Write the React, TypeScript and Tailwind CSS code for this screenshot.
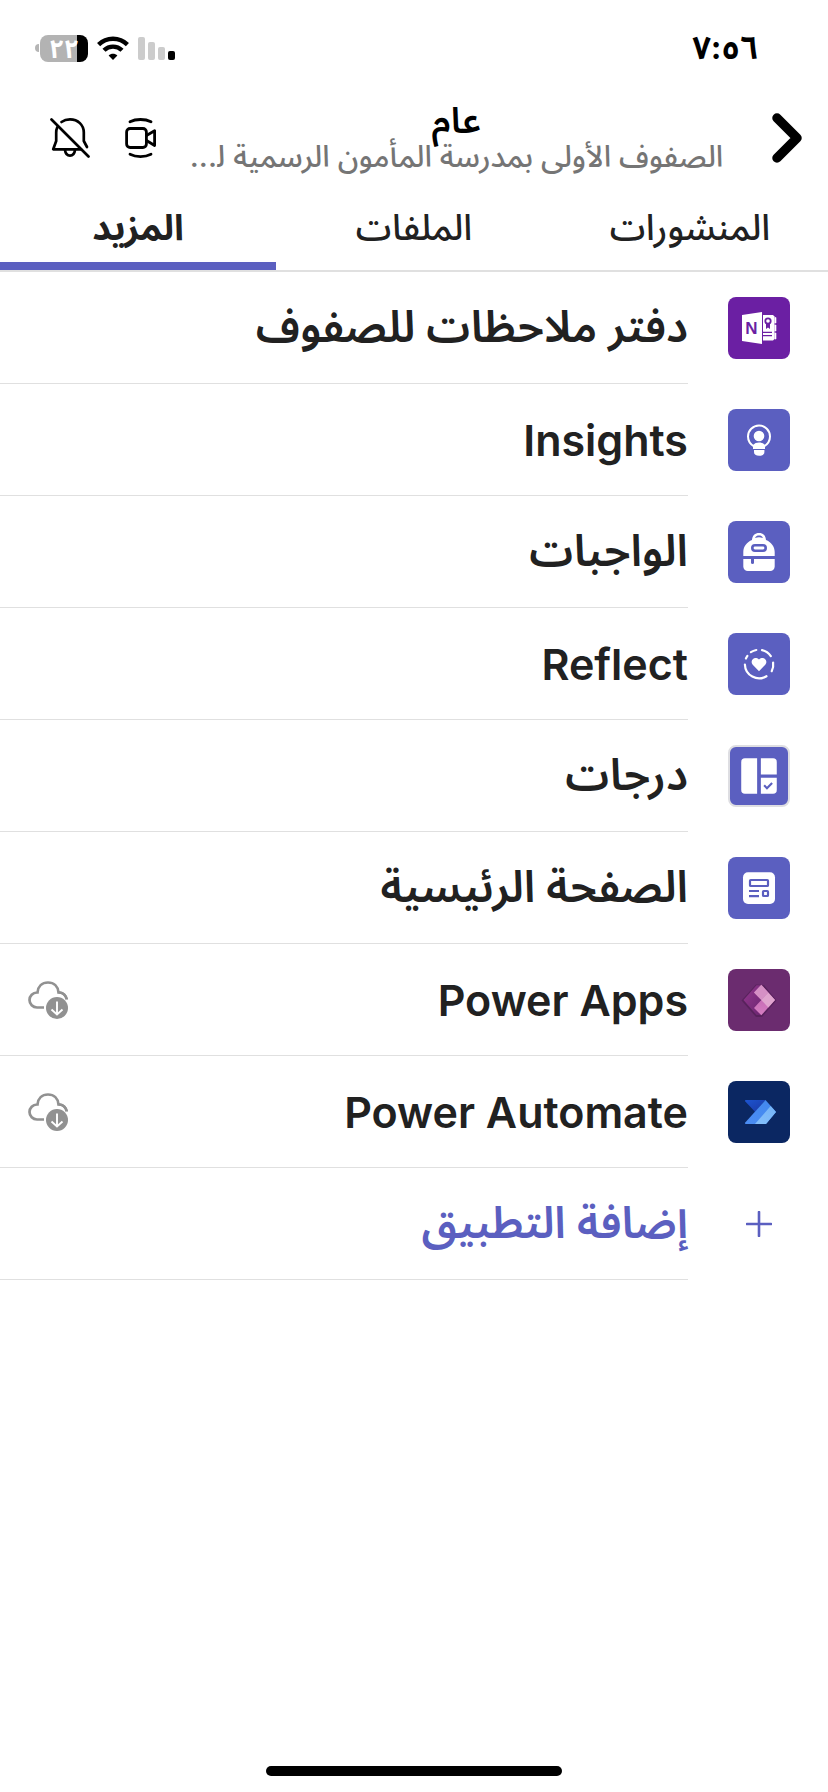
import type { ReactNode } from "react";

function Tile({ className, children }: { className: string; children: ReactNode }) {
  return (
    <span className={`flex size-[62px] shrink-0 overflow-hidden rounded-lg ${className}`}>
      <svg viewBox="0 0 62 62" className="size-full" aria-hidden="true">
        {children}
      </svg>
    </span>
  );
}

function NotebookIcon() {
  return (
    <Tile className="bg-[#6b1fa3]">
      <path d="M14 18 34 15V47L14 44Z" fill="#fff" />
      <text x="23.500" y="37" fontSize="17" fontWeight="700" fill="#6b1fa3" textAnchor="middle" className="font-['Liberation_Sans',sans-serif]">N</text>
      <path d="M35 18H45L46.500 19.500V42L45 43.500H35Z" fill="#fff" />
      <path d="M46.800 20.500H48V26H46.800ZM46.800 28H48V34H46.800ZM46.800 36H48V42H46.800Z" fill="#fff" stroke="#fff" strokeWidth=".6" />
      <circle cx="40" cy="24" r="2.700" fill="#fff" stroke="#6b1fa3" strokeWidth="1.800" />
      <path d="M38 26.500H42V32L40 30.500L38 32Z" fill="#6b1fa3" />
      <path d="M35 35.400H44M35 38.600H44" stroke="#6b1fa3" strokeWidth="1.200" />
    </Tile>
  );
}

function InsightsIcon() {
  return (
    <Tile className="bg-[#5b5fc0]">
      <path d="M26 39V37.500C22 35 20 31.500 20 27.500A11 11 0 0 1 42 27.500C42 31.500 40 35 36 37.500V39Z" fill="none" stroke="#fff" strokeWidth="2" />
      <circle cx="31" cy="27" r="5.300" fill="#fff" />
      <path d="M25 39V36C26.500 34.300 28.500 33.500 31 33.500S35.500 34.300 37 36V39Z" fill="#fff" />
      <path d="M26 41H36.400V43C36.400 45.500 34.500 46.800 31.200 46.800S26 45.500 26 43Z" fill="#fff" />
    </Tile>
  );
}

function BackpackIcon() {
  return (
    <Tile className="bg-[#5b5fc0]">
      <path d="M24 19C24.300 14.500 27 12 31 12S37.700 14.500 38 19C43 21 46.700 25.500 46.700 31V35H15.300V31C15.300 25.500 19 21 24 19Z" fill="#fff" />
      <path d="M27 17C28 15 29.200 14.600 31 14.600S34 15 35 17C32 16 30 16 27 17Z" fill="#5b5fc0" />
      <path d="M15.300 38H46.700V45.500A4.500 4.500 0 0 1 42.200 50H19.800A4.500 4.500 0 0 1 15.300 45.500Z" fill="#fff" />
      <rect x="24.300" y="24.300" width="13.400" height="5.400" rx="2.700" fill="#fff" stroke="#5b5fc0" strokeWidth="2.600" />
      <path d="M23 37H26V41.500A1.500 1.500 0 0 1 23 41.500Z" fill="#5b5fc0" />
    </Tile>
  );
}

function ReflectIcon() {
  return (
    <Tile className="bg-[#5b5fc0]">
      <g fill="none" stroke="#fff" strokeWidth="2.200" strokeLinecap="round">
        <path d="M16.900 31.500A14.200 14.200 0 0 0 38.500 43.200" />
        <path d="M43.700 38.200A14.200 14.200 0 0 0 45.100 29.500" />
        <path d="M42.800 23.200A14.200 14.200 0 0 0 34 17.100" />
        <path d="M28.300 17A14.200 14.200 0 0 0 22.900 19.200" />
        <path d="M19.400 22.800A14.200 14.200 0 0 0 17.900 25.500" />
      </g>
      <path d="M31 38.200 24.700 31.700C21.300 28 26.500 22.200 31 26.600C35.500 22.200 40.700 28 37.300 31.700Z" fill="#fff" />
    </Tile>
  );
}

function GradesIcon() {
  return (
    <Tile className="border-2 border-[#dedee2] bg-[#5b5fc0]">
      <path d="M16 12H29V50H16A4 4 0 0 1 12 46V16A4 4 0 0 1 16 12Z" fill="#fff" />
      <path d="M33 12H46A4 4 0 0 1 50 16V29.500H33Z" fill="#fff" />
      <path d="M33 33H50V46A4 4 0 0 1 46 50H33Z" fill="#fff" />
      <path d="M36.500 41 39.500 44 45 38.500" fill="none" stroke="#5b5fc0" strokeWidth="2.300" />
    </Tile>
  );
}

function HomeIcon() {
  return (
    <Tile className="bg-[#5b5fc0]">
      <rect x="15" y="15.200" width="32" height="31.800" rx="5" fill="#fff" />
      <g fill="none" stroke="#5b5fc0" strokeWidth="2.200">
        <rect x="22" y="23" width="18" height="6" rx=".8" />
        <path d="M21 34H31M21 39.200H31" />
        <rect x="35" y="34" width="5" height="5" rx=".8" />
      </g>
    </Tile>
  );
}

function PowerAppsIcon() {
  return (
    <Tile className="bg-[#6b2c6f]">
      <defs>
        <linearGradient id="pa-left" x1="0" y1="0" x2="1" y2="1">
          <stop offset="0" stopColor="#94398f" />
          <stop offset="1" stopColor="#6c2571" />
        </linearGradient>
        <linearGradient id="pa-low" x1="0" y1="0" x2="0" y2="1">
          <stop offset="0" stopColor="#b85bab" />
          <stop offset="1" stopColor="#d67fc2" />
        </linearGradient>
      </defs>
      <path d="M13.500 31.500 28 15.500 36 16 48.500 31.500 34 48 28 48Z" fill="#3d1542" opacity=".4" />
      <path d="M15.500 31 28.500 16.300H32L33 46 28.500 46Z" fill="url(#pa-left)" />
      <path d="M33.300 15.800 47 31 33.300 46.200 26 39 33.300 31 26 23.500Z" fill="url(#pa-low)" />
      <path d="M33.300 15.800 40.300 23.500 33.300 31 26 23.500Z" fill="#d590c5" />
      <path d="M40.300 23.500 47 31 40.300 38.500 33.300 31Z" fill="#e0a5cf" />
    </Tile>
  );
}

function PowerAutomateIcon() {
  return (
    <Tile className="bg-[#0b2762]">
      <defs>
        <linearGradient id="auto-top" x1="0" y1="0" x2="1" y2="1">
          <stop offset="0" stopColor="#1d55cf" />
          <stop offset="1" stopColor="#1a37a5" />
        </linearGradient>
        <linearGradient id="auto-mid" x1="1" y1="0" x2="0" y2="1">
          <stop offset="0" stopColor="#4188ee" />
          <stop offset="1" stopColor="#4c8df3" />
        </linearGradient>
        <linearGradient id="auto-end" x1="1" y1="0" x2="0" y2="1">
          <stop offset="0" stopColor="#74b3f7" />
          <stop offset="1" stopColor="#85c0fb" />
        </linearGradient>
      </defs>
      <path d="M17.500 19H37.500L27 31Q26.500 30 16.800 20Z" fill="url(#auto-top)" />
      <path d="M37.500 19 48 31 38 43H17.500L16.800 42Z" fill="url(#auto-mid)" />
      <path d="M42.700 25 48 31 38 43H27Z" fill="url(#auto-end)" />
    </Tile>
  );
}

function CloudDownloadIcon() {
  return (
    <svg viewBox="0 0 40 38" className="h-[38px] w-10 shrink-0" aria-hidden="true">
      <path d="M16 26.500H9A7.500 7.500 0 0 1 9 11.500H9.500C10 5.500 14 1.500 20 1.500S30 5.500 30.500 11.500H31.500C35.500 12 38 15 38.700 18.500" fill="none" stroke="#919191" strokeWidth="2.700" />
      <circle cx="29" cy="27" r="13" fill="#fff" />
      <path d="M30.500 11.500H31.500C35.500 12 38 15 38.700 18.500" fill="none" stroke="#919191" strokeWidth="2.700" />
      <circle cx="29" cy="27" r="11" fill="#919191" />
      <path d="M29 20.500V33M23.500 28.500 29 33.500 34.500 28.500" fill="none" stroke="#fff" strokeWidth="1.900" />
    </svg>
  );
}

const apps = [
  { name: "دفتر ملاحظات للصفوف", icon: <NotebookIcon /> },
  { name: "Insights", icon: <InsightsIcon />, latin: true },
  { name: "الواجبات", icon: <BackpackIcon /> },
  { name: "Reflect", icon: <ReflectIcon />, latin: true },
  { name: "درجات", icon: <GradesIcon /> },
  { name: "الصفحة الرئيسية", icon: <HomeIcon /> },
  { name: "Power Apps", icon: <PowerAppsIcon />, latin: true, cloud: true },
  { name: "Power Automate", icon: <PowerAutomateIcon />, latin: true, cloud: true },
];

function StatusBar() {
  return (
    <div className="flex h-24 items-center justify-between pr-[70px] pl-[35px]">
      <span className="text-[32px] leading-10 font-bold">٧:٥٦</span>
      <div className="flex items-center gap-[9px]" dir="ltr">
        <div className="flex items-center gap-px">
          <span className="h-2 w-1 rounded-l-full bg-[#b5b5b5]" />
          <span className="flex h-[27px] w-12 items-center justify-center rounded-lg bg-linear-to-r from-[#b3b3b3] from-77% to-black to-77% text-[26px] leading-[27px] font-bold text-white">
            ٢٢
          </span>
        </div>
        <svg viewBox="0 0 32 24" className="h-6 w-8" aria-hidden="true">
          <g fill="none" stroke="#000" strokeWidth="4.400">
            <path d="M1.600 8.600C9.500.700 22.500.700 30.400 8.600" />
            <path d="M7 14.300C12 9.400 20 9.400 25 14.300" />
          </g>
          <path d="M16 24 11.600 19.500C14 17.200 18 17.200 20.400 19.500Z" />
        </svg>
        <div className="flex h-6 items-end gap-[3px]">
          <span className="h-[23px] w-[7px] rounded-xs bg-[#cccccc]" />
          <span className="h-[18px] w-[7px] rounded-xs bg-[#cccccc]" />
          <span className="h-[13px] w-[7px] rounded-xs bg-[#cccccc]" />
          <span className="h-[9px] w-[7px] rounded-xs bg-black" />
        </div>
      </div>
    </div>
  );
}

function Header() {
  return (
    <header className="flex h-[84px] items-center pr-[26px] pl-[50px]">
      <button type="button" aria-label="رجوع" className="flex shrink-0">
        <svg viewBox="0 0 30 50" className="h-[50px] w-[30px]" aria-hidden="true">
          <path d="M5 5 25 25 5 45" fill="none" stroke="#000" strokeWidth="9.500" strokeLinecap="round" strokeLinejoin="round" />
        </svg>
      </button>
      <div className="mr-[52px] ml-9 flex min-w-0 flex-1 flex-col items-center">
        <h1 className="pb-1 text-[36px] leading-8 font-semibold">عام</h1>
        <p className="text-[30px] leading-8 font-medium whitespace-nowrap text-[#757575]">
          الصفوف الأولى بمدرسة المأمون الرسمية ل&zwj;...
        </p>
      </div>
      <div className="flex shrink-0 items-center gap-[35px]">
        <button type="button" aria-label="اجتماع الآن">
          <svg viewBox="0 0 32 40" className="h-10 w-8" fill="none" stroke="#000" strokeWidth="2.800" strokeLinecap="round" strokeLinejoin="round" aria-hidden="true">
            <rect x="1.600" y="10.500" width="19.800" height="19" rx="3.500" />
            <path d="M21.500 17.500 29.600 12.800V27.500L21.500 22.500" />
            <path d="M5 3.800C11 .700 20 .700 26 3.800M5 36.200C11 39.300 20 39.300 26 36.200" />
          </svg>
        </button>
        <button type="button" aria-label="كتم الإشعارات">
          <svg viewBox="0 0 40 40" className="size-10" fill="none" stroke="#000" strokeWidth="2.700" strokeLinecap="round" strokeLinejoin="round" aria-hidden="true">
            <path d="M1.500 1.500 38.500 38.500" />
            <path d="M11.500 4C14 2.200 17 1.400 20 1.400C28 1.400 33.800 7 33.800 14.500V23L37 29" />
            <path d="M7.200 9.500C6.500 11 6.200 12.700 6.200 14.500V23L3.200 31.300H31" />
            <path d="M15 32C15.500 36 17.500 37.600 20 37.600S24.500 36 25 32" />
          </svg>
        </button>
      </div>
    </header>
  );
}

export default function App() {
  return (
    <div dir="rtl" className="flex min-h-screen flex-col bg-white font-['Inter','Noto_Sans_Arabic','DejaVu_Sans',sans-serif] text-black">
      <StatusBar />
      <Header />
      <nav className="grid h-[92px] grid-cols-3 border-b-2 border-[#e0e0e0] text-[36px] leading-[46px] text-[#212121]">
        <a href="#posts" className="border-b-8 border-transparent pt-6 text-center font-medium">المنشورات</a>
        <a href="#files" className="border-b-8 border-transparent pt-6 text-center font-medium">الملفات</a>
        <a href="#more" aria-current="page" className="border-b-8 border-[#5b5fc0] pt-6 text-center font-bold">المزيد</a>
      </nav>
      <main className="flex-1">
        <ul>
          {apps.map((app) => (
            <li key={app.name}>
              <button type="button" className="flex h-28 w-full items-center gap-10 pr-[38px] text-[#212121]">
                {app.icon}
                <span className="flex h-full flex-1 items-center justify-between border-b border-[#e0e0e0] pl-7">
                  <span className={app.latin ? "text-[43px] leading-[56px] font-semibold" : "pb-1 text-[44px] leading-[56px] font-semibold"}>{app.name}</span>
                  {app.cloud && <CloudDownloadIcon />}
                </span>
              </button>
            </li>
          ))}
          <li>
            <button type="button" className="flex h-28 w-full items-center gap-10 pr-[38px] text-[#5b5fc0]">
              <span className="flex size-[62px] shrink-0 items-center justify-center">
                <svg viewBox="0 0 26 26" className="size-[26px]" aria-hidden="true">
                  <path d="M13 1V25M1 13H25" stroke="#5b5fc0" strokeWidth="2.600" strokeLinecap="round" />
                </svg>
              </span>
              <span className="flex h-full flex-1 items-center border-b border-[#e0e0e0]">
                <span className="pb-1 text-[44px] leading-[56px] font-semibold">إضافة التطبيق</span>
              </span>
            </button>
          </li>
        </ul>
      </main>
      <footer className="flex justify-center pb-4">
        <span className="h-2.5 w-[296px] rounded-full bg-black" />
      </footer>
    </div>
  );
}
